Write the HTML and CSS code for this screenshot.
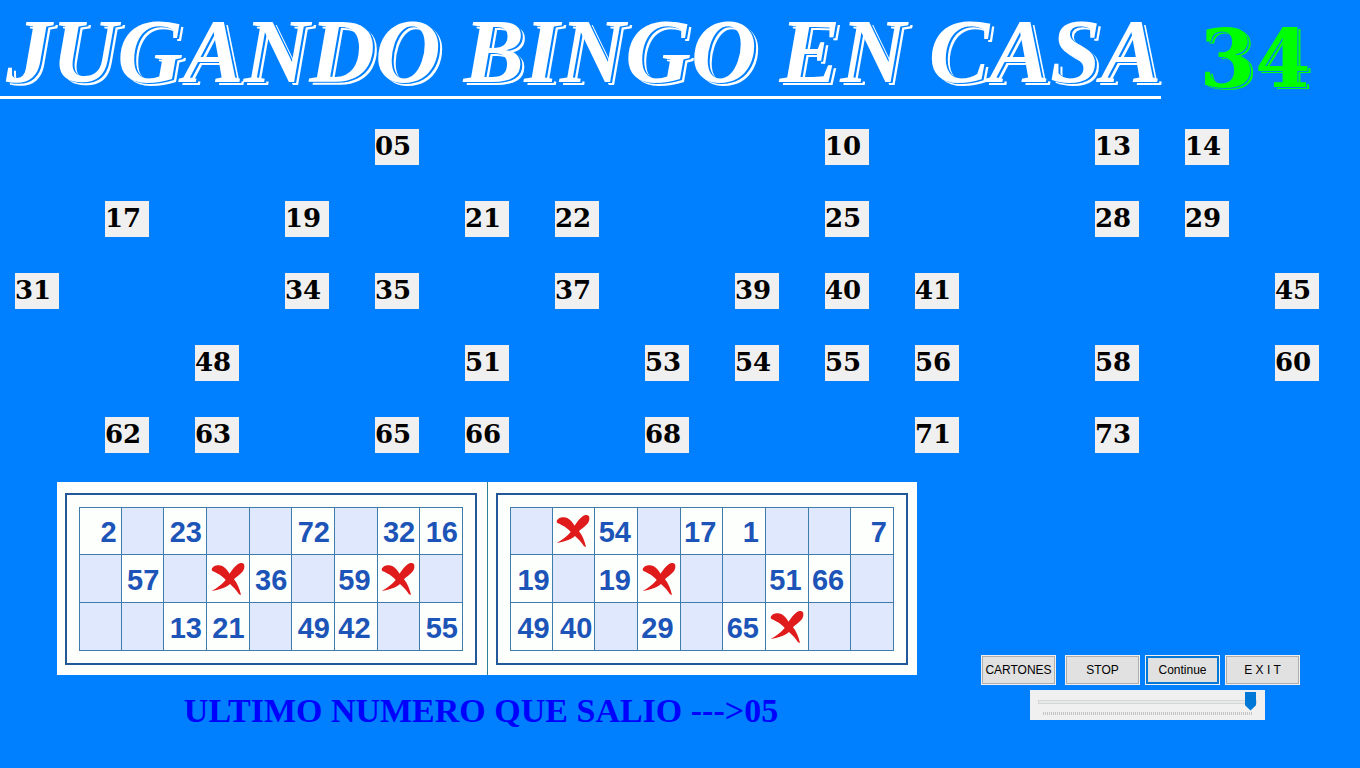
FILE: index.html
```
<!DOCTYPE html>
<html lang="es">
<head>
    <meta charset="UTF-8">
    <meta name="viewport" content="width=device-width, initial-scale=1.0">
    <title>Jugando Bingo en Casa</title>
    <link rel="stylesheet" href="styles.css">
</head>
<body>
    <svg class="symbols" aria-hidden="true">
        <symbol id="mark" viewBox="0 0 102 100">
            <path d="M2 22C4 10 22 6 34 11C43 15 50 26 56 34C64 22 76 6 86 3C94 1 100 3 100 10C101 22 94 30 84 38C78 43 72 47 69 51C78 62 86 78 90 98L84 96C76 83 66 73 57 65C42 78 24 82 2 86C20 76 34 66 44 53C32 39 20 33 4 26Z"/>
        </symbol>
    </svg>

    <header>
        <h1>JUGANDO BINGO EN CASA</h1>
        <div class="count">34</div>
    </header>

    <main>
        <div class="board">
            <span class="ball col-5">05</span>
            <span class="ball col-10">10</span>
            <span class="ball col-13">13</span>
            <span class="ball col-14">14</span>

            <span class="ball col-2">17</span>
            <span class="ball col-4">19</span>
            <span class="ball col-6">21</span>
            <span class="ball col-7">22</span>
            <span class="ball col-10">25</span>
            <span class="ball col-13">28</span>
            <span class="ball col-14">29</span>

            <span class="ball col-1">31</span>
            <span class="ball col-4">34</span>
            <span class="ball col-5">35</span>
            <span class="ball col-7">37</span>
            <span class="ball col-9">39</span>
            <span class="ball col-10">40</span>
            <span class="ball col-11">41</span>
            <span class="ball col-15">45</span>

            <span class="ball col-3">48</span>
            <span class="ball col-6">51</span>
            <span class="ball col-8">53</span>
            <span class="ball col-9">54</span>
            <span class="ball col-10">55</span>
            <span class="ball col-11">56</span>
            <span class="ball col-13">58</span>
            <span class="ball col-15">60</span>

            <span class="ball col-2">62</span>
            <span class="ball col-3">63</span>
            <span class="ball col-5">65</span>
            <span class="ball col-6">66</span>
            <span class="ball col-8">68</span>
            <span class="ball col-11">71</span>
            <span class="ball col-13">73</span>
        </div>

        <div class="bottom">
            <div class="play">
                <div class="cards">
                    <div class="card">
                        <table>
                            <tr><td>2</td><td></td><td>23</td><td></td><td></td><td>72</td><td></td><td>32</td><td>16</td></tr>
                            <tr><td></td><td>57</td><td></td><td class="hit"><svg class="mark"><use href="#mark"/></svg></td><td>36</td><td></td><td>59</td><td class="hit"><svg class="mark"><use href="#mark"/></svg></td><td></td></tr>
                            <tr><td></td><td></td><td>13</td><td>21</td><td></td><td>49</td><td>42</td><td></td><td>55</td></tr>
                        </table>
                    </div>
                    <div class="card second">
                        <table>
                            <tr><td></td><td class="hit"><svg class="mark"><use href="#mark"/></svg></td><td>54</td><td></td><td>17</td><td>1</td><td></td><td></td><td>7</td></tr>
                            <tr><td>19</td><td></td><td>19</td><td class="hit"><svg class="mark"><use href="#mark"/></svg></td><td></td><td></td><td>51</td><td>66</td><td></td></tr>
                            <tr><td>49</td><td>40</td><td></td><td>29</td><td></td><td>65</td><td class="hit"><svg class="mark"><use href="#mark"/></svg></td><td></td><td></td></tr>
                        </table>
                    </div>
                </div>
                <p class="last">ULTIMO NUMERO QUE SALIO ---&gt;05</p>
            </div>

            <div class="controls">
                <div class="buttons">
                    <button type="button" class="btn cartones">CARTONES</button>
                    <button type="button" class="btn">STOP</button>
                    <button type="button" class="btn active">Continue</button>
                    <button type="button" class="btn">E X I T</button>
                </div>
                <div class="speed">
                    <input type="range" min="0" max="100" value="100" aria-label="Velocidad">
                    <div class="ticks"></div>
                </div>
            </div>
        </div>
    </main>
</body>
</html>
```
FILE: styles.css
```
:root {
    --blue: #0080ff;
    --ink: #1c54b8;
    --line: #3f7bab;
    --frame: #22589a;
    --empty: #dfe8fc;
    --gray: #f0f0f0;
}

* {
    margin: 0;
    padding: 0;
    box-sizing: border-box;
}

body {
    background: var(--blue);
    min-height: 100vh;
    font-family: Algerian, "Liberation Serif", serif;
    overflow-x: hidden;
}

.symbols {
    display: none;
}

header {
    display: flex;
    align-items: flex-start;
    gap: 38px;
    white-space: nowrap;
}

h1 {
    padding: 8px 0 0 6px;
    border-bottom: 3px solid white;
    color: white;
    font-size: 91px;
    font-style: italic;
    font-weight: bold;
    line-height: 88px;
    text-shadow: 2px 1px 0 var(--blue), 4px 3px 0 white;
}

.count {
    padding-top: 22px;
    color: #00ff00;
    font-family: Algerian, "DejaVu Serif", serif;
    font-size: 80px;
    font-weight: bold;
    line-height: 75px;
    text-shadow: 1px 1px 0 var(--blue), 3px 2px 0 #00ff00;
}

/* Called numbers */
.board {
    display: grid;
    grid-template-columns: repeat(15, 44px);
    grid-auto-rows: 36px;
    justify-content: space-between;
    row-gap: 36px;
    padding: 30px 41px 0 15px;
}

.ball {
    background: var(--gray);
    color: black;
    font-family: Algerian, "DejaVu Serif", serif;
    font-size: 26px;
    font-weight: bold;
    line-height: 34px;
}

.col-1 { grid-column: 1; }
.col-2 { grid-column: 2; }
.col-3 { grid-column: 3; }
.col-4 { grid-column: 4; }
.col-5 { grid-column: 5; }
.col-6 { grid-column: 6; }
.col-7 { grid-column: 7; }
.col-8 { grid-column: 8; }
.col-9 { grid-column: 9; }
.col-10 { grid-column: 10; }
.col-11 { grid-column: 11; }
.col-13 { grid-column: 13; }
.col-14 { grid-column: 14; }
.col-15 { grid-column: 15; }

.bottom {
    display: flex;
    align-items: flex-end;
    justify-content: space-between;
    padding: 29px 60px 0 57px;
}

/* Cards */
.cards {
    display: flex;
    background: #fdfffd;
}

.card {
    padding: 11px 10px 10px 8px;
}

.card.second {
    padding-right: 9px;
    border-left: 1px solid #2f7f95;
}

.card table {
    width: 412px;
    border: 2px solid var(--frame);
    border-spacing: 0;
    padding: 12px;
    table-layout: fixed;
}

.card td {
    height: 48px;
    padding: 2px 4px 0 0;
    border-right: 1px solid var(--line);
    border-bottom: 1px solid var(--line);
    color: var(--ink);
    font-family: "Liberation Sans", Arial, sans-serif;
    font-size: 29px;
    font-weight: bold;
    line-height: 34px;
    text-align: right;
}

.card td:first-child {
    border-left: 1px solid var(--line);
}

.card tr:first-child td {
    border-top: 1px solid var(--line);
}

.card td:nth-child(7),
.card.second td:nth-child(n+3) {
    padding-right: 6px;
}

.card.second td:nth-child(-n+2) {
    padding-right: 2px;
}

.card td:empty {
    background: var(--empty);
}

.card .hit.hit,
.card.second .hit.hit {
    padding: 0;
    text-align: center;
}

.mark {
    display: block;
    width: 34px;
    height: 34px;
    margin: 0 auto;
    fill: #e01b1b;
}

.last {
    padding: 16px 12px 0 0;
    color: #0000ff;
    font-size: 34px;
    font-weight: bold;
    line-height: 40px;
    text-align: center;
}

/* Buttons and speed slider */
.controls {
    display: flex;
    flex-direction: column;
    align-items: center;
    gap: 5px;
    padding-bottom: 11px;
}

.buttons {
    display: flex;
    gap: 5px;
}

.btn {
    width: 75px;
    height: 30px;
    border: 1px solid #f0f0f0;
    outline: 1px solid #adadad;
    outline-offset: -2px;
    background: #e1e1e1;
    color: black;
    font-family: "Liberation Sans", Arial, sans-serif;
    font-size: 12px;
    white-space: nowrap;
}

.btn.cartones {
    margin-right: 4px;
}

.btn.active {
    outline: 2px solid #0078d7;
    outline-offset: -3px;
}

.speed {
    width: 235px;
    height: 30px;
    margin-left: 14px;
    padding: 2px 8px 0;
    background: var(--gray);
}

.speed input {
    display: block;
    width: 100%;
    height: 19px;
    appearance: none;
    background: transparent;
}

.speed input::-webkit-slider-runnable-track {
    height: 4px;
    border: 1px solid #d6d6d6;
    background: #e7eaea;
}

.speed input::-webkit-slider-thumb {
    appearance: none;
    width: 11px;
    height: 19px;
    margin-top: -9px;
    background: #0078d7;
    clip-path: polygon(0 0, 100% 0, 100% 72%, 50% 100%, 0 72%);
}

.ticks {
    height: 3px;
    margin: 1px 5px 0;
    background: repeating-linear-gradient(90deg, #c4c4c4 0 1px, var(--gray) 1px 2px);
}
```
